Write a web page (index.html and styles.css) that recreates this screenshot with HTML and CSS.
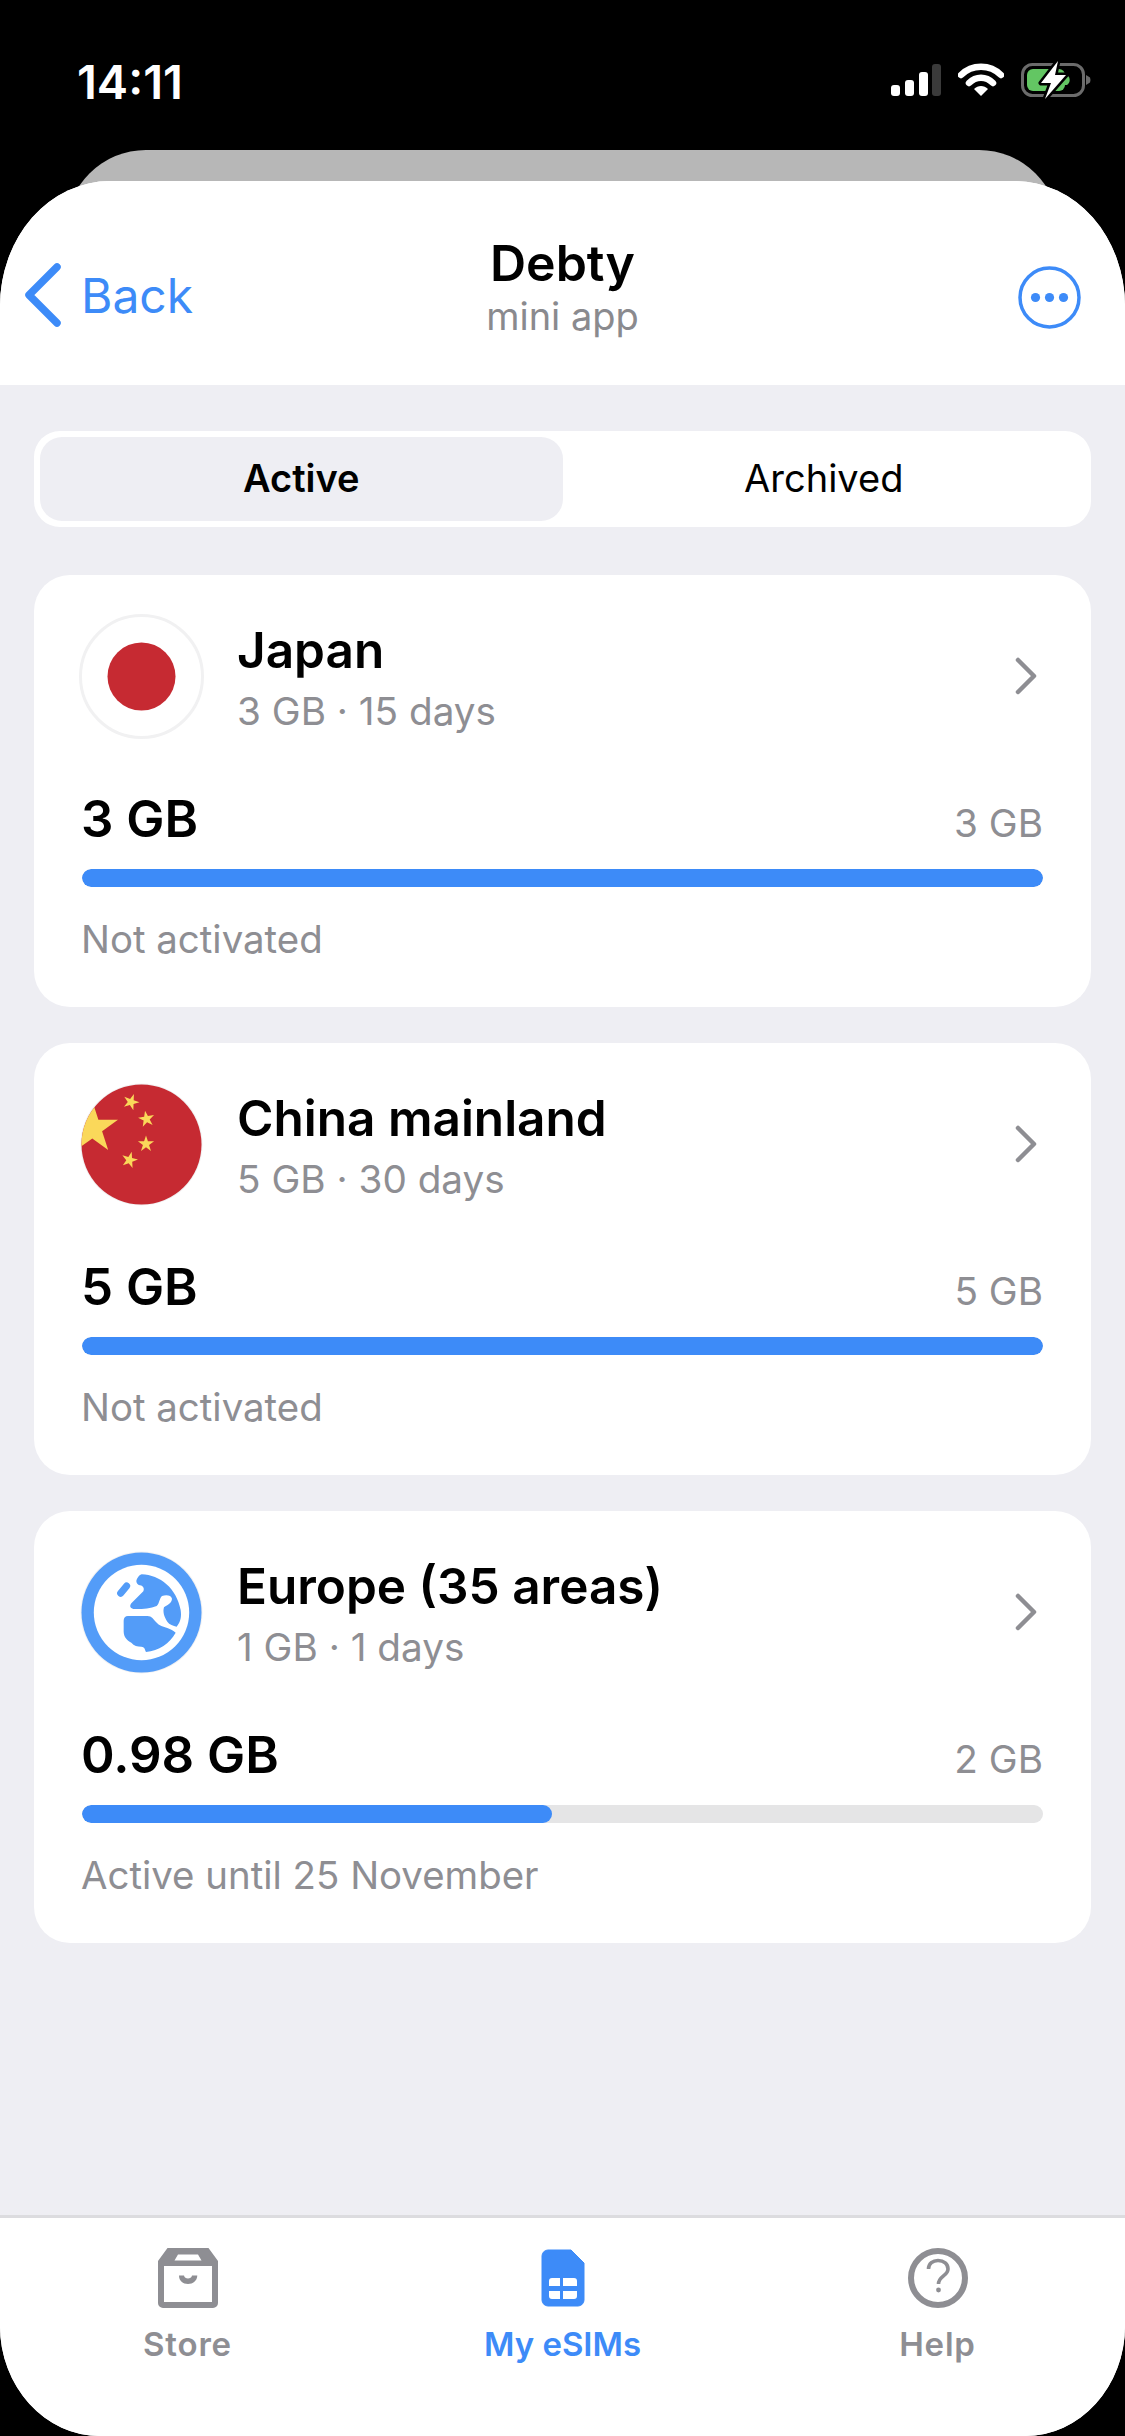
FILE: index.html
```html
<!DOCTYPE html>
<html lang="en">
  <head>
    <meta charset="UTF-8" />
    <meta name="viewport" content="width=device-width, initial-scale=1.0" />
    <title>Debty</title>
    <link rel="stylesheet" href="styles.css">
  </head>
  <body>
    <div class="status">
      <span class="time">14:11</span>
      <div class="status-icons">
        <svg class="signal" width="50" height="32" viewBox="0 0 50 32">
          <rect x="0" y="21" width="9" height="11" rx="3" fill="#fff" />
          <rect x="14" y="16" width="9" height="16" rx="3" fill="#fff" />
          <rect x="28" y="8" width="9" height="24" rx="3" fill="#fff" />
          <rect x="41" y="0" width="9" height="32" rx="3" fill="#3a3a3a" />
        </svg>
        <svg class="wifi" width="46" height="34" viewBox="0 0 46 34">
          <path d="M3 12 C14 1 32 1 43 12" fill="none" stroke="#fff" stroke-width="6.5" stroke-linecap="round" />
          <path d="M11 20 C18 13 28 13 35 20" fill="none" stroke="#fff" stroke-width="6.5" stroke-linecap="round" />
          <path d="M16 26 C20 22 26 22 30 26 L23 33 Z" fill="#fff" />
        </svg>
        <svg class="battery" width="72" height="38" viewBox="0 0 72 38">
          <rect x="1.5" y="3.5" width="61" height="31" rx="10" fill="none" stroke="#6b6b6b" stroke-width="3" />
          <path d="M65 14 L69 16.5 Q70 19 69 21.5 L65 24 Z" fill="#6b6b6b" />
          <rect x="6" y="8" width="38" height="22" rx="6" fill="#63c663" />
          <path d="M44 14 h2 a6 6 0 0 1 0 10 h-2 Z" fill="#63c663" />
          <path d="M37 0 L20 22 H30 L24 38 L45 14 H34 Z" fill="#fff" stroke="#000" stroke-width="5" stroke-linejoin="round" paint-order="stroke" />
        </svg>
      </div>
    </div>

    <div class="peek"></div>

    <div class="sheet">
      <header class="topbar">
        <a class="back">
          <svg width="38" height="64" viewBox="0 0 38 64">
            <path d="M33 4 L5 32 L33 60" fill="none" stroke="#3d8bf8" stroke-width="7.5" stroke-linecap="round" stroke-linejoin="round" />
          </svg>
          <span>Back</span>
        </a>
        <div class="title">
          <h1>Debty</h1>
          <p>mini app</p>
        </div>
        <svg class="more" width="63" height="63" viewBox="0 0 63 63">
          <circle cx="31.5" cy="31.5" r="29.5" fill="none" stroke="#3d8bf8" stroke-width="3.5" />
          <circle cx="17.5" cy="31.5" r="4.6" fill="#3d8bf8" />
          <circle cx="31.5" cy="31.5" r="4.6" fill="#3d8bf8" />
          <circle cx="45.5" cy="31.5" r="4.6" fill="#3d8bf8" />
        </svg>
      </header>

      <main class="content">
        <div class="segment">
          <div class="seg-item active">Active</div>
          <div class="seg-item">Archived</div>
        </div>

        <section class="card">
          <div class="card-head">
            <svg class="flag" width="125" height="125" viewBox="0 0 125 125">
              <circle cx="62.5" cy="62.5" r="61" fill="#fff" stroke="#f1f1f2" stroke-width="3" />
              <circle cx="62.5" cy="62.5" r="34" fill="#c62a32" />
            </svg>
            <div class="card-text">
              <div class="name">Japan</div>
              <div class="sub">3 GB · 15 days</div>
            </div>
            <svg class="chevron" width="24" height="38" viewBox="0 0 24 38">
              <path d="M4 3 L20 19 L4 35" fill="none" stroke="#8e8e93" stroke-width="4.5" stroke-linecap="round" stroke-linejoin="round" />
            </svg>
          </div>
          <div class="usage"><b>3 GB</b><span>3 GB</span></div>
          <div class="bar"><div class="fill" style="width: 100%"></div></div>
          <div class="note">Not activated</div>
        </section>

        <section class="card">
          <div class="card-head">
            <svg class="flag" width="125" height="125" viewBox="0 0 125 125">
              <defs>
                <clipPath id="cnClip"><circle cx="62.5" cy="62.5" r="60" /></clipPath>
                <polygon id="star" points="0,-10 2.25,-3.09 9.51,-3.09 3.63,1.18 5.88,8.09 0,3.82 -5.88,8.09 -3.63,1.18 -9.51,-3.09 -2.25,-3.09" />
              </defs>
              <circle cx="62.5" cy="62.5" r="61" fill="#f1f1f2" />
              <g clip-path="url(#cnClip)" fill="#fad85a">
                <rect width="125" height="125" fill="#c62a32" />
                <use href="#star" transform="translate(13.3 46.1) scale(2.7)" />
                <use href="#star" transform="translate(52 20) rotate(20) scale(.85)" />
                <use href="#star" transform="translate(67.5 37) rotate(-10) scale(.85)" />
                <use href="#star" transform="translate(67 62) scale(.85)" />
                <use href="#star" transform="translate(50.5 78) rotate(15) scale(.85)" />
              </g>
            </svg>
            <div class="card-text">
              <div class="name">China mainland</div>
              <div class="sub">5 GB · 30 days</div>
            </div>
            <svg class="chevron" width="24" height="38" viewBox="0 0 24 38">
              <path d="M4 3 L20 19 L4 35" fill="none" stroke="#8e8e93" stroke-width="4.5" stroke-linecap="round" stroke-linejoin="round" />
            </svg>
          </div>
          <div class="usage"><b>5 GB</b><span>5 GB</span></div>
          <div class="bar"><div class="fill" style="width: 100%"></div></div>
          <div class="note">Not activated</div>
        </section>

        <section class="card">
          <div class="card-head">
            <svg class="flag" width="125" height="125" viewBox="0 0 125 125">
              <circle cx="62.5" cy="62.5" r="61" fill="#f1f1f2" />
              <circle cx="62.5" cy="62.5" r="60" fill="#539cf8" />
              <circle cx="62.5" cy="62.5" r="47.7" fill="#fff" />
              <g transform="translate(-19 -20) scale(.3333)" fill="#539cf8">
                <path d="M245 133 C300 135 350 175 362 240 C365 260 362 275 350 290 C340 288 328 284 322 275 C312 260 308 245 312 232 C320 225 336 220 336 206 C334 195 318 193 306 198 C298 205 298 222 290 228 C270 236 240 238 220 237 C210 235 208 228 214 220 L250 184 C254 175 250 168 240 166 C230 164 226 154 232 145 C236 138 240 134 245 133 Z" />
                <path d="M204 258 H262 C276 258 280 268 288 276 C298 288 310 290 322 294 C332 298 340 302 347 308 C330 340 296 362 258 366 C254 358 256 352 244 350 C232 350 222 348 214 338 C200 330 192 322 191 305 V272 C191 264 196 258 204 258 Z" />
                <path d="M182 190 L200 168" fill="none" stroke="#539cf8" stroke-width="21" stroke-linecap="round" />
              </g>
            </svg>
            <div class="card-text">
              <div class="name">Europe (35 areas)</div>
              <div class="sub">1 GB · 1 days</div>
            </div>
            <svg class="chevron" width="24" height="38" viewBox="0 0 24 38">
              <path d="M4 3 L20 19 L4 35" fill="none" stroke="#8e8e93" stroke-width="4.5" stroke-linecap="round" stroke-linejoin="round" />
            </svg>
          </div>
          <div class="usage"><b>0.98 GB</b><span>2 GB</span></div>
          <div class="bar"><div class="fill" style="width: 48.9%"></div></div>
          <div class="note">Active until 25 November</div>
        </section>
      </main>

      <nav class="tabbar">
        <div class="tab">
          <svg width="60" height="60" viewBox="0 0 60 60">
            <path d="M9.5 0 H50.5 L60 13 V55 A5 5 0 0 1 55 60 H5 A5 5 0 0 1 0 55 V13 Z M6 18 V54 H54 V18 Z M20 6.5 L16.5 12.5 H43.5 L40 6.5 Z" fill="#8e8e93" fill-rule="evenodd" />
            <path d="M21 27.5 H26 C26.5 29.8 28 30.5 30 30.5 C32 30.5 33.5 29.8 34 27.5 H39.3 C39 33 35 36 30 36 C25 36 21 33 21 27.5 Z" fill="#8e8e93" />
          </svg>
          <span>Store</span>
        </div>
        <div class="tab current">
          <svg width="60" height="60" viewBox="-9 -2 60 60">
            <path d="M6 0 H29 L42 13 V50 A6 6 0 0 1 36 56 H6 A6 6 0 0 1 0 50 V6 A6 6 0 0 1 6 0 Z" fill="#3d8bf8" stroke="#3d8bf8" stroke-linejoin="round" />
            <path d="M10 28 H18 V36 H7 V31 A3 3 0 0 1 10 28 Z M21 28 H32 A3 3 0 0 1 35 31 V36 H21 Z M7 41 H18 V49 H10 A3 3 0 0 1 7 46 Z M21 41 H35 V46 A3 3 0 0 1 32 49 H21 Z" fill="#fff" />
          </svg>
          <span>My eSIMs</span>
        </div>
        <div class="tab">
          <svg width="60" height="60" viewBox="0 0 60 60">
            <circle cx="30" cy="30" r="27" fill="none" stroke="#8e8e93" stroke-width="6" />
            <path d="M20.5 21 C20.5 15.5 25 12.5 30 12.5 C36 12.5 40 16 40 21 C40 28 30.5 28 30.5 36" fill="none" stroke="#8e8e93" stroke-width="3.6" />
            <circle cx="30.5" cy="42" r="2.4" fill="#8e8e93" />
          </svg>
          <span>Help</span>
        </div>
      </nav>
    </div>
  </body>
</html>
```

FILE: styles.css
```css
* {
  box-sizing: border-box;
}

body {
  margin: 0;
  width: 1125px;
  height: 2436px;
  overflow: hidden;
  background: #000000;
  font-family: Inter, "Liberation Sans", sans-serif;
  color: #000000;
}

.status {
  height: 150px;
  padding: 64px 32px 0 77px;
  display: flex;
  justify-content: space-between;
  align-items: flex-start;
  color: #ffffff;
}

.time {
  font-size: 47px;
  line-height: 36px;
  font-weight: 600;
}

.status-icons {
  display: flex;
  align-items: flex-start;
  gap: 17px;
}

.wifi {
  margin-top: -1px;
}

.battery {
  margin-top: -3px;
}

.peek {
  height: 80px;
  margin: 0 66px -49px;
  background: #b7b7b7;
  border-radius: 80px 80px 0 0;
}

.sheet {
  position: relative;
  height: 2255px;
  display: flex;
  flex-direction: column;
  overflow: hidden;
  background: #ffffff;
  border-radius: 110px 110px 100px 100px / 125px 125px 110px 110px;
}

.topbar {
  height: 204px;
  padding: 0 24px;
  display: grid;
  grid-template-columns: 1fr auto 1fr;
  align-items: start;
  background: #ffffff;
}

.back {
  display: flex;
  align-items: center;
  gap: 19px;
  margin-top: 82px;
  color: #3d8bf8;
  font-size: 48px;
  font-weight: 400;
}

.title {
  margin-top: 52px;
  text-align: center;
}

.title h1 {
  margin: 0;
  font-size: 50px;
  line-height: 60px;
  font-weight: 600;
}

.title p {
  margin: 0;
  font-size: 38px;
  line-height: 46px;
  color: #8a8a8e;
}

.more {
  justify-self: end;
  margin-top: 85px;
  margin-right: 20px;
}

.content {
  flex: 1;
  padding: 46px 34px 0;
  background: #eeeef3;
}

.segment {
  height: 96px;
  padding: 6px;
  margin-bottom: 48px;
  display: grid;
  grid-template-columns: 1fr 1fr;
  background: #ffffff;
  border-radius: 26px;
}

.seg-item {
  display: flex;
  justify-content: center;
  align-items: center;
  padding-bottom: 2px;
  font-size: 38px;
  border-radius: 22px;
}

.seg-item.active {
  background: #eeeef3;
  font-weight: 600;
}

.card {
  padding: 39px 48px 45px;
  margin-bottom: 36px;
  background: #ffffff;
  border-radius: 36px;
}

.card-head {
  display: flex;
  align-items: center;
}

.flag {
  flex-shrink: 0;
  margin-left: -3px;
}

.card-text {
  flex: 1;
  align-self: flex-start;
  padding-top: 8px;
  margin-left: 33px;
}

.name {
  font-size: 49.5px;
  line-height: 56px;
  font-weight: 600;
}

.sub {
  margin-top: 10px;
  font-size: 38.7px;
  line-height: 46px;
  color: #8e8e93;
}

.chevron {
  margin-right: 5px;
  margin-top: -2px;
}

.usage {
  margin-top: 52px;
  display: flex;
  justify-content: space-between;
  align-items: baseline;
}

.usage b {
  margin-left: -1px;
  font-size: 51px;
  line-height: 56px;
  font-weight: 600;
}

.usage span {
  font-size: 38.7px;
  color: #8e8e93;
}

.bar {
  height: 18px;
  margin-top: 22px;
  background: #e5e5e6;
  border-radius: 9px;
  overflow: hidden;
}

.fill {
  height: 100%;
  background: #3d8bf8;
  border-radius: 9px;
}

.note {
  margin-top: 29px;
  margin-left: -1px;
  font-size: 38.4px;
  line-height: 46px;
  color: #8e8e93;
}

.tabbar {
  height: 221px;
  padding-top: 30px;
  display: grid;
  grid-template-columns: repeat(3, 1fr);
  align-items: start;
  background: #ffffff;
  border-top: 3px solid #dcdcdf;
}

.tab {
  display: flex;
  flex-direction: column;
  align-items: center;
  gap: 16px;
  font-size: 33px;
  line-height: 40px;
  font-weight: 600;
  letter-spacing: 0.8px;
  color: #8e8e93;
}

.tab.current {
  letter-spacing: 0;
  color: #3d8bf8;
}
```
